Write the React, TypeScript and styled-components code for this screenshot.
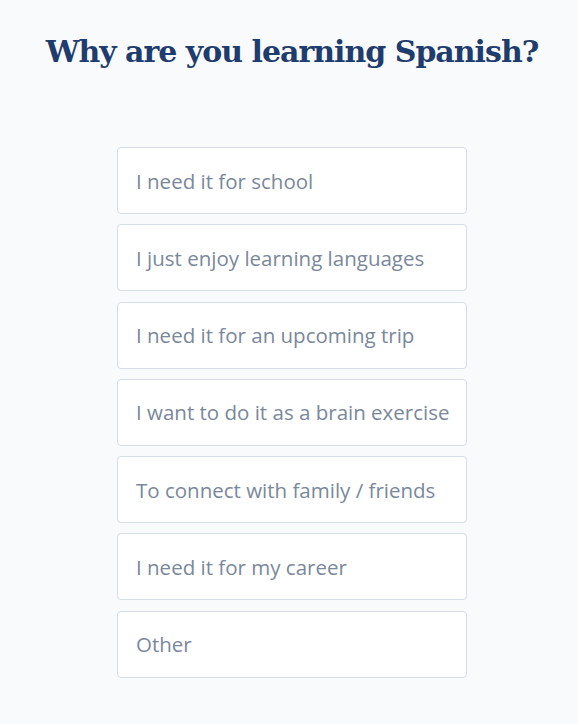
import React from "react";
import styled, { createGlobalStyle } from "styled-components";

const Global = createGlobalStyle`
  html, body { margin: 0; padding: 0; background: #f8fafc; }
  * { box-sizing: border-box; }
`;

const Page = styled.div`
  width: 578px;
  min-height: 724px;
  background: #f8fafc;
  display: flex;
  flex-direction: column;
  align-items: center;
  padding-top: 30px;
  padding-left: 6px;
`;

const Title = styled.h1`
  margin: 0;
  font-family: "DejaVu Serif", "Liberation Serif", serif;
  font-weight: 700;
  font-size: 30px;
  line-height: 44px;
  color: #1f3c6e;
  letter-spacing: -1px;
  white-space: nowrap;
`;

const List = styled.div`
  margin-top: 73px;
  width: 350px;
  display: flex;
  flex-direction: column;
  gap: 10.3px;
`;

const Option = styled.button`
  height: 67px;
  width: 100%;
  background: #ffffff;
  border: 1px solid #d6dde9;
  border-radius: 4px;
  padding: 0 0 0 18px;
  text-align: left;
  white-space: nowrap;
  overflow: hidden;
  font-family: "Open Sans", "Noto Sans", sans-serif;
  font-size: 20.5px;
  color: #7a889b;
  cursor: pointer;
`;

const options = [
  "I need it for school",
  "I just enjoy learning languages",
  "I need it for an upcoming trip",
  "I want to do it as a brain exercise",
  "To connect with family / friends",
  "I need it for my career",
  "Other",
];

export default function App() {
  return (
    <Page>
      <Global />
      <Title>Why are you learning Spanish?</Title>
      <List>
        {options.map((o) => (
          <Option key={o}>{o}</Option>
        ))}
      </List>
    </Page>
  );
}
